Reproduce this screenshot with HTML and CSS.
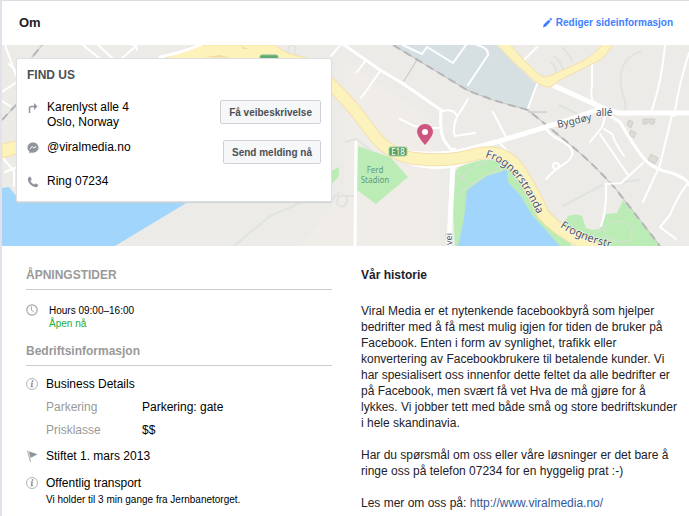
FILE: index.html
```html
<!DOCTYPE html>
<html lang="no">
<head>
	<meta charset="utf-8">
	<title>Om - Viral Media</title>
	<link rel="stylesheet" href="styles.css">
</head>
<body>
<main class="page">
	<header class="top">
		<h1>Om</h1>
		<a class="edit" href="#"><svg width="9" height="10" viewBox="0 0 9 10"><path d="M0 9.500l.7-3L5.600 1.700 7.600 3.500 2.800 8.600zM6.200 1.100L7.100.2q.5-.4 1 0l.7.7q.4.4 0 .9l-.7.9z" fill="#4080ff"/></svg>Rediger sideinformasjon</a>
	</header>

	<section class="find">
		<svg class="map" viewBox="2 45 687 201" preserveAspectRatio="xMinYMid slice">
			<rect x="2" y="45" width="687" height="201" fill="#edebe7"/>
			<path d="M188 202L115 246H300L345 190L440 165V246H250L345 246V60L430 120L440 246H115z" fill="#f0ece8"/>
			<path d="M188 202L145 246H290L345 190V180zM560 45H689V246H660L528 112z" fill="#ecebe7"/>
			<!-- industrial area, water and parks -->
			<path d="M393 45H497L515 63Q530 80 537 84L528 110L467 90z" fill="#d6dfe1"/>
			<path d="M2 188L9 187L17 197V202H188L115 246H2z" fill="#a1d5fc"/>
			<path d="M331 171L339 167V176L331 185zM358 146L372 151L390 157L408 177L376 204L357 190z" fill="#bcecb6"/>
			<path d="M455 246L452 190Q452 172 460 167Q476 158 492 160L508 164L530 192L572 246z" fill="#bcecb6"/>
			<path d="M458 246L464 219L467 190L487 176L507 170L508 182L520 195L532 215L560 246z" fill="#a1d5fc"/>
			<path d="M563 225L568 216Q576 213 582 216Q584 222 586 228Q592 231 599 229Q603 225 603 222L606 214L617 213L623 200L660 246H585z" fill="#bcecb6"/>
			<!-- footpaths -->
			<g class="path">
				<path d="M454 188Q462 172 487 161M455 196L475 182Q490 172 503 169M457 173L469 184M578 246Q600 230 605 226Q613 218 626 223Q635 232 630 240Q617 245 606 236L604 228"/>
				<path class="wide" d="M641 51Q628 56 623 66Q619 78 622 91Q627 104 625 112M550 62Q557 66 557 76M554 56Q561 62 564 71M562 47Q570 55 573 63M559 105L590 120M563 206L604 184L640 180"/>
				<path class="wide" d="M234 246L270 216L305 201L330 202L339 192M338 197Q348 192 347 202Q343 210 337 204zM345 142L356 139L372 151M345 196H355"/>
				<path d="M295 45V56Q288 56 288 51Q288 45 293 45"/>
			</g>
			<g fill="#dedbd6" stroke="#d2cfca">
				<path d="M629 120l4 2-2 6-4-3zM643 119h12l-1 5h-4v-2h-3v2h-4zM631 130l5 3-2 5-5-3zM651 154l7 4-3 6-7-4z"/>
			</g>
			<!-- railway -->
			<g class="rail">
				<path d="M393 45L467 90Q490 100 528 110L562 138Q590 160 615 188L660 246M528 112H547M2 120L17 104M25 66L42 45M404 81L418 58"/>
			</g>
			<g class="dash">
				<path d="M393 45L467 90Q490 100 528 110L562 138Q590 160 615 188L660 246M2 120L17 104M25 66L42 45"/>
			</g>
			<!-- side streets -->
			<g class="street thin">
				<path d="M5 45L17 78M2 101L10 106M9 64L17 72M2 92L17 82M83 45L111 68L137 45M98 45L120 65M119 43Q137 43 137 50M2 157L14 171V186M5 172L17 167M331 56L342 43"/>
				<path d="M357 72L366 60M361 98L381 70M403 45L422 54L427 47L453 63L466 45M477 45Q489 48 488 55L468 85M400 119L414 126L431 128L442 128M442 111Q455 108 457 117L468 99M457 117Q452 128 455 136L475 133M493 112L507 139M524 60L537 47"/>
				<path d="M528 108L537 84M592 58V87Q590 92 593 103M665 45Q662 80 652 110M689 53Q680 80 674 116M544 126Q548 134 560 140Q575 148 572 155Q570 162 557 168L546 179M590 142L602 127L605 117M600 134L628 175M604 129L612 134Q616 145 624 156M643 163L621 183L605 184M672 115L660 165L643 202M606 184Q607 210 601 226M689 182Q678 195 670 215L660 227L676 239M499 142L520 166"/>
				<circle cx="556" cy="166" r="3"/>
			</g>
			<g class="street">
				<path d="M340 42L380 70L402 83L441 110Q439 135 446 143L453 152M607 114L620 122Q633 145 645 160Q655 170 672 173Q689 180 689 185M356 142L355 246"/>
			</g>
			<g class="street main">
				<path d="M395 151Q420 156 455 153Q474 148 500 141L562 122L603 108L550 84M598 107L618 113H689M454 150Q452 180 449 246M380 144Q410 172 454 165L485 156"/>
			</g>
			<!-- E18 and the larger roads -->
			<path d="M160 61L195 45H276Q282 52 294 55L318 61zM2 144L20 140V153L2 158z" fill="#fcf2ba" stroke="#f6dfa5"/>
			<path d="M205 57L220 55L230 58zM241 46L249 49L243 49z" fill="#f0dca4"/>
			<path class="edge" d="M320 75Q345 95 370 130Q388 157 420 159Q450 162 477 154Q505 148 520 171Q535 194 543 214Q565 240 620 256"/>
			<path class="road" d="M320 75Q345 95 370 130Q388 157 420 159Q450 162 477 154Q505 148 520 171Q535 194 543 214Q565 240 620 256"/>
			<path d="M495 42Q513 63 525 72Q537 85 547 87Q552 88 558 81L600 60Q612 50 612 43H603Q598 52 583 61L554 74Q546 79 540 75Q525 63 509 43z" fill="#fcf2bb" stroke="#f3dfab"/>
			<path d="M160 57Q185 52 204 43" class="street"/>
			<!-- labels -->
			<rect x="260" y="55" width="18" height="10" rx="2" fill="#63a972" stroke="#7ac489"/>
			<rect x="389" y="147" width="18" height="9" rx="2" fill="#5ba066" stroke="#9bd39e"/>
			<text class="badge" x="398" y="155">E18</text>
			<text class="park" x="375" y="173">Ferd</text>
			<text class="park" x="375" y="183">Stadion</text>
			<text class="label" transform="rotate(-13 558 128)" x="558" y="128">Bygdøy</text>
			<text class="label" x="596" y="116">allé</text>
			<path id="frogner1" d="M485 157Q508 164 522 186Q532 202 541 222L560 260" fill="none"/>
			<path id="frogner2" d="M560 227Q576 238 600 245L700 272" fill="none"/>
			<text class="label big"><textPath href="#frogner1">Frognerstranda</textPath></text>
			<text class="label big"><textPath href="#frogner2">Frognerstr</textPath></text>
			<text class="label small" transform="rotate(-90 452 245)" x="452" y="245">vei</text>
			<!-- marker -->
			<path d="M425 145Q417 136 417 132A8 8 0 0 1 433 132Q433 136 425 145z" fill="#cf5580"/>
			<circle cx="425" cy="132" r="3" fill="#fff"/>
		</svg>

		<div class="card">
			<h2>FIND US</h2>
			<div class="row">
				<svg class="icon" width="12" height="12" viewBox="0 0 12 12"><path d="M2.500 11V6.500Q2.500 4.500 4.500 4.500H8" fill="none" stroke="#90949c" stroke-width="1.500"/><path d="M7 1L10.500 4.500L7 8z" fill="#90949c"/></svg>
				<address>Karenlyst alle 4<br>Oslo, Norway</address>
				<button type="button">Få veibeskrivelse</button>
			</div>
			<div class="row">
				<svg class="icon" width="12" height="12" viewBox="0 0 12 12"><path d="M6 .5C2.800.5.500 2.700.500 5.600c0 1.600.7 2.900 1.900 3.900v2l1.900-1c.5.1 1.100.2 1.700.2 3.200 0 5.500-2.300 5.500-5.100S9.200.5 6 .5z" fill="#90949c"/><path d="M2.700 7L5.300 4.500L6.700 5.900L9.300 4.600" fill="none" stroke="#fff"/></svg>
				<span>@viralmedia.no</span>
				<button type="button">Send melding nå</button>
			</div>
			<div class="row">
				<svg class="icon" width="12" height="12" viewBox="0 0 12 12"><path d="M2.300.8Q3 .2 3.500 1L4.600 3Q4.900 3.600 4.200 4.200L3.500 4.900Q4.600 7.300 7 8.500L7.800 7.700Q8.400 7.200 9 7.600L11 8.800Q11.700 9.300 11 10Q9.700 11.700 7.700 11.100Q2.400 9.200.900 4.200Q.3 2.100 2.300.800z" fill="#90949c"/></svg>
				<span>Ring 07234</span>
			</div>
		</div>
	</section>

	<div class="columns">
		<section class="info">
			<h2>ÅPNINGSTIDER</h2>
			<div class="item hours">
				<svg class="icon" width="12" height="12" viewBox="0 0 12 12"><circle cx="6" cy="6" r="5.200" fill="none" stroke="#a4a7ad" stroke-width="1.200"/><path d="M5.500 2.500V6L8 8.500" fill="none" stroke="#a4a7ad"/></svg>
				<div>Hours 09:00–16:00<br><span class="open">Åpen nå</span></div>
			</div>

			<h2>Bedriftsinformasjon</h2>
			<div class="item">
				<svg class="icon" width="12" height="12" viewBox="0 0 12 12"><circle cx="6" cy="6" r="5.500" fill="none" stroke="#b0b3b8"/><path d="M4.700 4.500H7L6.300 8.300H7.200V9.200H4.600L5.300 5.400H4.700z" fill="#90949c"/><circle cx="6.500" cy="3" r=".9" fill="#90949c"/></svg>
				<div>Business Details</div>
			</div>
			<dl>
				<dt>Parkering</dt><dd>Parkering: gate</dd>
				<dt>Prisklasse</dt><dd>$$</dd>
			</dl>
			<div class="item">
				<svg class="icon" width="12" height="12" viewBox="0 0 12 12"><path d="M1.500.5L4.500 12" stroke="#a4a7ad"/><path d="M2.800 1.200L11.500 4.200L4.500 8z" fill="#90949c"/></svg>
				<div>Stiftet 1. mars 2013</div>
			</div>
			<div class="item">
				<svg class="icon" width="12" height="12" viewBox="0 0 12 12"><circle cx="6" cy="6" r="5.500" fill="none" stroke="#b0b3b8"/><path d="M4.700 4.500H7L6.300 8.300H7.200V9.200H4.600L5.300 5.400H4.700z" fill="#90949c"/><circle cx="6.500" cy="3" r=".9" fill="#90949c"/></svg>
				<div>Offentlig transport<small>Vi holder til 3 min gange fra Jernbanetorget.</small></div>
			</div>
		</section>

		<section class="story">
			<h2>Vår historie</h2>
			<p>Viral Media er et nytenkende facebookbyrå som hjelper bedrifter med å få mest mulig igjen for tiden de bruker på Facebook. Enten i form av synlighet, trafikk eller konvertering av Facebookbrukere til betalende kunder. Vi har spesialisert oss innenfor dette feltet da alle bedrifter er på Facebook, men svært få vet Hva de må gjøre for å lykkes. Vi jobber tett med både små og store bedriftskunder i hele skandinavia.</p>
			<p>Har du spørsmål om oss eller våre løsninger er det bare å ringe oss på telefon 07234 for en hyggelig prat :-)</p>
			<p>Les mer om oss på: <a href="http://www.viralmedia.no/">http://www.viralmedia.no/</a></p>
		</section>
	</div>
</main>
</body>
</html>
```
FILE: styles.css
```css
* {
    box-sizing: border-box;
}

body {
    margin: 0;
    background: #fff;
    color: #1d2129;
    font: 12px/16px "Liberation Sans", Arial, sans-serif;
}

.page {
    min-height: 100vh;
    border-top: 1px solid #dcdde3;
    border-left: 2px solid #e1e2ea;
}

h1, h2, p, dl, dd {
    margin: 0;
}

h1 {
    font-size: 13px;
}

h2 {
    font-size: 12px;
}

.top {
    display: flex;
    justify-content: space-between;
    align-items: center;
    height: 44px;
    padding: 0 16px 0 17px;
}

.edit {
    display: flex;
    align-items: center;
    gap: 4px;
    color: #4080ff;
    font-size: 10px;
    font-weight: bold;
    text-decoration: none;
}

.find {
    position: relative;
    padding: 13px 14px 44px;
}

.map {
    position: absolute;
    top: 0;
    left: 0;
    width: 100%;
    height: 100%;
}

.street {
    fill: none;
    stroke: #fff;
    stroke-width: 3;
    stroke-linecap: round;
}

.thin {
    stroke-width: 2;
}

.main {
    stroke-width: 5;
}

.path {
    fill: none;
    stroke: #dadfd8;
    stroke-width: 1;
}

.wide {
    stroke: #e1e3de;
    stroke-width: 2;
}

.rail {
    fill: none;
    stroke: #c0c0c1;
    stroke-width: 1;
}

.dash {
    fill: none;
    stroke: #b5b5b7;
    stroke-width: 2;
    stroke-dasharray: 8 5;
}

.edge, .road {
    fill: none;
    stroke: #f3dfb0;
    stroke-width: 13;
}

.road {
    stroke: #fcf2bb;
    stroke-width: 11;
}

.label {
    fill: #4b505e;
    stroke: #fff;
    stroke-width: 1;
    paint-order: stroke;
    font: 10px "Noto Sans", sans-serif;
}

.big {
    font-size: 11px;
}

.small {
    font-size: 9px;
}

.badge, .park {
    fill: #fff;
    font: 8px "Noto Sans", sans-serif;
    text-anchor: middle;
}

.park {
    fill: #5f9c7c;
}

.card {
    position: relative;
    width: 316px;
    padding: 9px 10px 3px;
    background: #fff;
    border: 1px solid #dddfe2;
    border-radius: 2px;
    box-shadow: 0 1px 1px #d0d1d5;
}

.card h2 {
    margin-bottom: 18px;
    line-height: 14px;
    color: #4b4f56;
}

.row {
    display: flex;
    align-items: flex-start;
    min-height: 24px;
    line-height: 15px;
    color: #000;
}

.row + .row {
    margin-top: 10px;
}

.row .icon {
    margin: 2px 8px 0 0;
}

address {
    font-style: normal;
}

.row button {
    height: 24px;
    margin-left: auto;
    padding: 0 8px;
    background: #f6f7f9;
    border: 1px solid #ced0d4;
    border-radius: 2px;
    color: #4b4f56;
    font: bold 10px "Liberation Sans", Arial, sans-serif;
}

.icon {
    flex: none;
}

.columns {
    display: grid;
    grid-template-columns: 306fr 319fr;
    gap: 29px;
    padding: 21px 9px 0 24px;
}

.info h2 {
    padding-bottom: 6px;
    border-bottom: 1px solid #ccc;
    color: #999;
}

.item {
    display: flex;
    gap: 8px;
    margin-top: 10px;
    color: #000;
}

.item .icon {
    margin-top: 2px;
}

.hours {
    gap: 11px;
    margin: 14px 0 13px;
    font-size: 10px;
    line-height: 13px;
}

.hours .icon {
    margin-top: 0;
}

.open {
    color: #20ad3c;
}

dl {
    display: grid;
    grid-template-columns: 96px 1fr;
    row-gap: 7px;
    margin: 7px 0 0 20px;
    color: #000;
}

dt {
    color: #999;
}

.item + .item {
    margin-top: 11px;
}

small {
    display: block;
    margin-top: 1px;
    font-size: 10px;
}

.story h2 {
    margin-bottom: 20px;
}

.story p {
    margin-bottom: 16px;
}

.story p:last-child {
    margin-bottom: 0;
}

.story a {
    color: #365899;
    text-decoration: none;
}
```
